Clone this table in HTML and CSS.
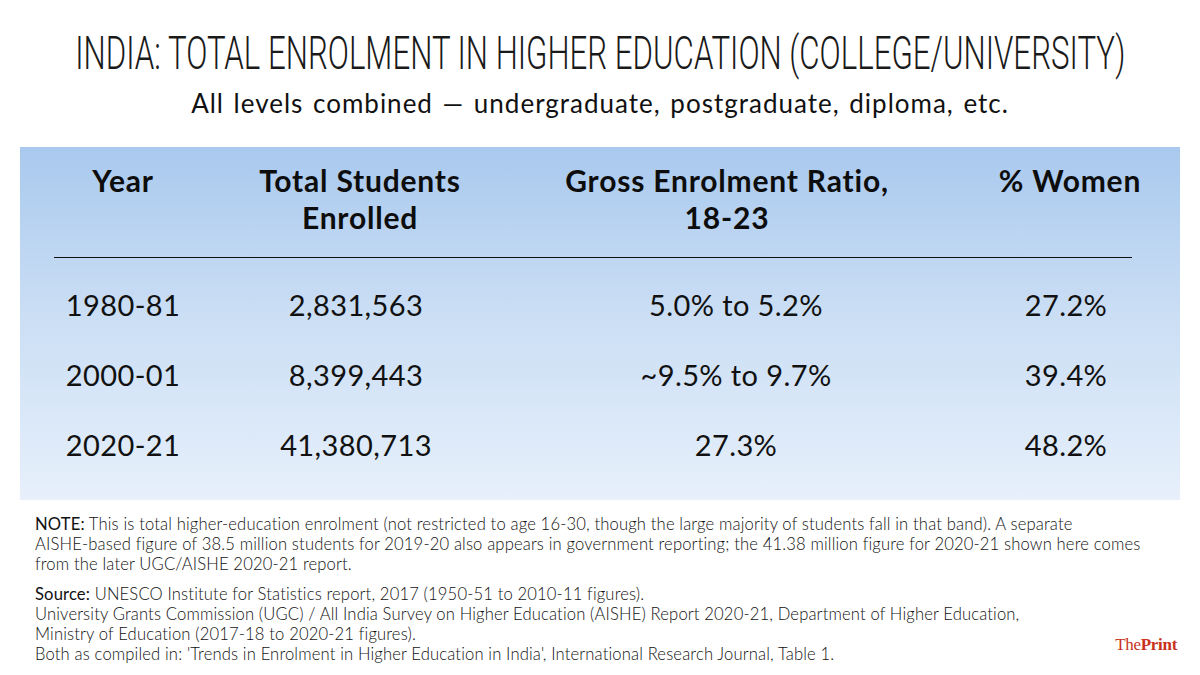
FILE: index.html
```html
<!DOCTYPE html>
<html>
<head>
<meta charset="utf-8">
<link rel="stylesheet" href="styles.css">
</head>
<body>
<div class="page">
  <header class="head">
    <h1 class="title"><span class="title-text">INDIA: TOTAL ENROLMENT IN HIGHER EDUCATION (COLLEGE/UNIVERSITY)</span></h1>
    <p class="subtitle">All levels combined — undergraduate, postgraduate, diploma, etc.</p>
  </header>
  <section class="panel">
    <div class="grid head-row">
      <div class="cell c1">Year</div>
      <div class="cell c2">Total Students<br>Enrolled</div>
      <div class="cell c3">Gross Enrolment Ratio,<br>18-23</div>
      <div class="cell c4">% Women</div>
    </div>
    <div class="rule"></div>
    <div class="grid data-row">
      <div class="cell c1">1980-81</div>
      <div class="cell c2 d2">2,831,563</div>
      <div class="cell c3 d3">5.0% to 5.2%</div>
      <div class="cell c4 d4">27.2%</div>
    </div>
    <div class="grid data-row">
      <div class="cell c1">2000-01</div>
      <div class="cell c2 d2">8,399,443</div>
      <div class="cell c3 d3">~9.5% to 9.7%</div>
      <div class="cell c4 d4">39.4%</div>
    </div>
    <div class="grid data-row">
      <div class="cell c1">2020-21</div>
      <div class="cell c2 d2">41,380,713</div>
      <div class="cell c3 d3">27.3%</div>
      <div class="cell c4 d4">48.2%</div>
    </div>
  </section>
  <footer class="notes">
    <p class="para"><span class="lbl">NOTE:</span> This is total higher-education enrolment (not restricted to age 16-30, though the large majority of students fall in that band). A separate<br>AISHE-based figure of 38.5 million students for 2019-20 also appears in government reporting; the 41.38 million figure for 2020-21 shown here comes<br>from the later UGC/AISHE 2020-21 report.</p>
    <p class="para"><span class="lbl">Source:</span> UNESCO Institute for Statistics report, 2017 (1950-51 to 2010-11 figures).<br>University Grants Commission (UGC) / All India Survey on Higher Education (AISHE) Report 2020-21, Department of Higher Education,<br>Ministry of Education (2017-18 to 2020-21 figures).<br>Both as compiled in: 'Trends in Enrolment in Higher Education in India', International Research Journal, Table 1.</p>
    <div class="logo"><span class="logo-the">The</span><span class="logo-print">Print</span></div>
  </footer>
</div>
</body>
</html>
```
FILE: styles.css
```css
* { box-sizing: border-box; }
html, body { margin: 0; padding: 0; }
body {
  width: 1200px;
  height: 675px;
  background: #ffffff;
  color: #111111;
  font-family: "Lato", "Noto Sans", sans-serif;
  overflow: hidden;
}
.page {
  display: flex;
  flex-direction: column;
  height: 675px;
}
.head {
  text-align: center;
  padding-top: 28px;
  height: 147px;
}
.title {
  margin: 0;
  display: flex;
  justify-content: center;
  font-family: "Roboto", sans-serif;
  font-weight: 300;
  font-size: 46px;
  line-height: 50px;
  color: #1a1a1a;
  white-space: nowrap;
}
.title-text {
  display: inline-block;
  flex: none;
  transform: scaleX(0.679);
  transform-origin: center;
}
.subtitle {
  margin: 10px 0 0;
  font-size: 26px;
  line-height: 30px;
  color: #111;
  letter-spacing: 1px;
  word-spacing: 2px;
}
.panel {
  margin: 0 20px;
  height: 353px;
  background: linear-gradient(180deg, #a9c9ee 0%, #c9ddf4 45%, #e7f0fb 100%);
  padding-top: 15px;
}
.grid {
  display: grid;
  grid-template-columns: 206px 268px 466px 220px;
}
.cell { text-align: center; }
.head-row {
  font-weight: 700;
  font-size: 30px;
  line-height: 37px;
  letter-spacing: 0.8px;
  height: 74px;
  color: #0d0d0d;
}
.rule {
  height: 1px;
  background: #111;
  margin: 21px 48px 0 34px;
}
.data-row {
  font-size: 29px;
  line-height: 36px;
  letter-spacing: 0.4px;
  height: 70px;
  align-items: center;
}
.head-row + .rule + .data-row { margin-top: 12px; }
.d2 { padding-right: 8px; }
.d3 { padding-left: 18px; }
.d4 { padding-right: 8px; }
.notes {
  position: relative;
  padding: 14px 0 0 35px;
  font-weight: 300;
  font-size: 16.6px;
  line-height: 20px;
  letter-spacing: 0.15px;
  color: #111;
}
.para {
  margin: 0 0 10px;
  white-space: nowrap;
}
.lbl { font-weight: 400; }
.logo {
  position: absolute;
  right: 23px;
  top: 135px;
  font-family: "Liberation Serif", serif;
  font-size: 17px;
  color: #c8321c;
  letter-spacing: -0.3px;
}
.logo-print { font-weight: 700; }
```
